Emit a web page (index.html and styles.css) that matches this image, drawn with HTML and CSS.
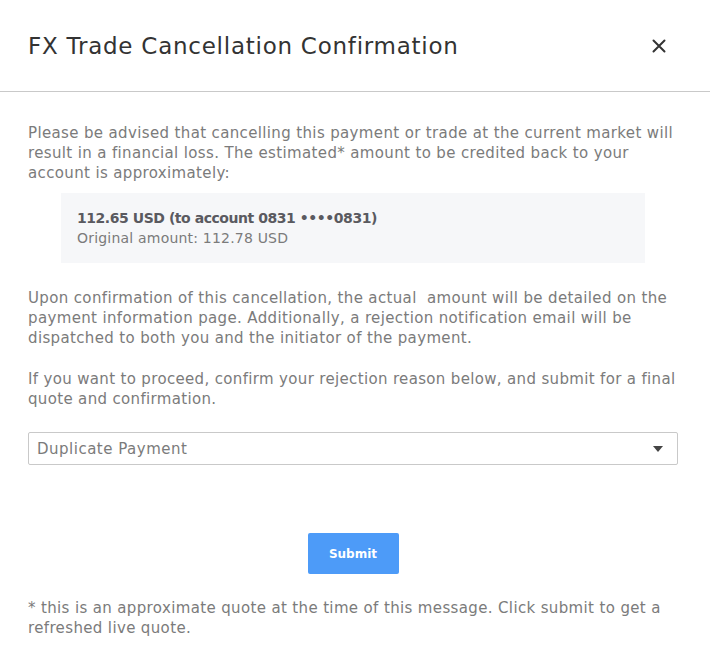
FILE: index.html
```html
<!DOCTYPE html>
<html>
<head>
<meta charset="utf-8">
<link rel="stylesheet" href="styles.css">
</head>
<body>
<div class="modal">
  <div class="modal-header">
    <h1 class="modal-title">FX Trade Cancellation Confirmation</h1>
    <button class="close-btn" aria-label="Close">
      <svg width="14" height="14" viewBox="0 0 14 14"><path d="M1.5 1.5 L12.5 12.5 M12.5 1.5 L1.5 12.5" stroke="#333" stroke-width="2" stroke-linecap="round"/></svg>
    </button>
  </div>
  <div class="modal-body">
    <p class="text p1">Please be advised that cancelling this payment or trade at the current market will result in a financial loss. The estimated* amount to be credited back to your account is approximately:</p>
    <div class="amount-box">
      <div class="amount-main">112.65 USD (to account 0831 ••••0831)</div>
      <div class="amount-sub">Original amount: 112.78 USD</div>
    </div>
    <p class="text p2">Upon confirmation of this cancellation, the actual&nbsp; amount will be detailed on the payment information page. Additionally, a rejection notification email will be dispatched to both you and the initiator of the payment.</p>
    <p class="text p3">If you want to proceed, confirm your rejection reason below, and submit for a final quote and confirmation.</p>
    <div class="select">
      <span class="select-value">Duplicate Payment</span>
      <svg class="caret" width="10" height="6" viewBox="0 0 10 6"><path d="M0 0 L10 0 L5 6 Z" fill="#444"/></svg>
    </div>
    <div class="actions">
      <button class="submit-btn">Submit</button>
    </div>
    <p class="text footnote">* this is an approximate quote at the time of this message. Click submit to get a refreshed live quote.</p>
  </div>
</div>
</body>
</html>
```

FILE: styles.css
```css
* { box-sizing: border-box; }
html, body {
  margin: 0;
  padding: 0;
  background: #fff;
}
body {
  font-family: "DejaVu Sans", sans-serif;
  color: #777;
}
.modal {
  width: 710px;
  min-height: 667px;
  background: #fff;
}
.modal-header {
  height: 92px;
  display: flex;
  align-items: center;
  justify-content: space-between;
  padding: 1px 44px 0 28px;
  border-bottom: 1px solid #c9c9c9;
}
.modal-title {
  margin: 0;
  font-size: 23px;
  font-weight: 400;
  color: #333;
  letter-spacing: 0.75px;
}
.close-btn {
  border: 0;
  background: none;
  padding: 0;
  width: 14px;
  height: 14px;
  display: flex;
  cursor: pointer;
}
.modal-body {
  padding: 31px 32px 0 28px;
}
.text {
  margin: 0;
  font-size: 15px;
  line-height: 20px;
  color: #7b7b7b;
  letter-spacing: 0.36px;
}
.amount-box {
  margin: 10px 0 0 33px;
  width: 584px;
  background: #f6f7f9;
  padding: 15px 16px;
  line-height: 20px;
}
.amount-main {
  font-size: 14px;
  font-weight: 700;
  color: #5a5a60;
  letter-spacing: -0.45px;
}
.amount-sub {
  font-size: 14px;
  color: #7b7b7b;
  letter-spacing: 0.2px;
}
.p2 { margin-top: 25px; }
.p3 { margin-top: 21px; letter-spacing: 0.34px; }
.select {
  margin-top: 23px;
  height: 33px;
  border: 1px solid #c9c9c9;
  border-radius: 2px;
  display: flex;
  align-items: center;
  justify-content: space-between;
  padding: 0 14px 0 8px;
}
.select-value {
  font-size: 15px;
  color: #7b7b7b;
  letter-spacing: 0.5px;
}
.actions {
  display: flex;
  justify-content: center;
  margin-top: 68px;
}
.submit-btn {
  width: 91px;
  height: 41px;
  border: 0;
  border-radius: 2px;
  background: #4d9bf8;
  color: #fff;
  font-family: "DejaVu Sans", sans-serif;
  font-weight: 700;
  font-size: 12px;
  cursor: pointer;
}
.footnote { margin-top: 24px; }
```
